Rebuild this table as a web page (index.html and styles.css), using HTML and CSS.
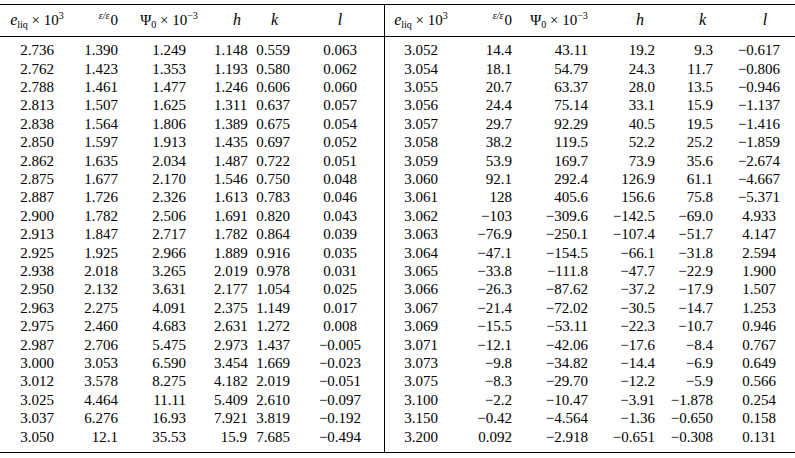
FILE: index.html
```html
<!DOCTYPE html>
<html>
<head>
<meta charset="utf-8">
<link rel="stylesheet" href="styles.css">
</head>
<body>
<div class="sheet">
  <div class="half left">
    <div class="head">
      <div class="c1"><i class="e">e</i><sub>liq</sub> × 10<sup>3</sup></div>
      <div class="c2"><span class="frac">ε/ε</span>0</div>
      <div class="c3">Ψ<sub>0</sub> × 10<sup>−3</sup></div>
      <div class="c4"><i class="var">h</i></div>
      <div class="c5"><i class="var">k</i></div>
      <div class="c6"><i class="var">l</i></div>
    </div>
    <div class="rows">
      <div class="row"><span class="c1">2.736</span><span class="c2">1.390</span><span class="c3">1.249</span><span class="c4">1.148</span><span class="c5">0.559</span><span class="c6">0.063</span></div>
      <div class="row"><span class="c1">2.762</span><span class="c2">1.423</span><span class="c3">1.353</span><span class="c4">1.193</span><span class="c5">0.580</span><span class="c6">0.062</span></div>
      <div class="row"><span class="c1">2.788</span><span class="c2">1.461</span><span class="c3">1.477</span><span class="c4">1.246</span><span class="c5">0.606</span><span class="c6">0.060</span></div>
      <div class="row"><span class="c1">2.813</span><span class="c2">1.507</span><span class="c3">1.625</span><span class="c4">1.311</span><span class="c5">0.637</span><span class="c6">0.057</span></div>
      <div class="row"><span class="c1">2.838</span><span class="c2">1.564</span><span class="c3">1.806</span><span class="c4">1.389</span><span class="c5">0.675</span><span class="c6">0.054</span></div>
      <div class="row"><span class="c1">2.850</span><span class="c2">1.597</span><span class="c3">1.913</span><span class="c4">1.435</span><span class="c5">0.697</span><span class="c6">0.052</span></div>
      <div class="row"><span class="c1">2.862</span><span class="c2">1.635</span><span class="c3">2.034</span><span class="c4">1.487</span><span class="c5">0.722</span><span class="c6">0.051</span></div>
      <div class="row"><span class="c1">2.875</span><span class="c2">1.677</span><span class="c3">2.170</span><span class="c4">1.546</span><span class="c5">0.750</span><span class="c6">0.048</span></div>
      <div class="row"><span class="c1">2.887</span><span class="c2">1.726</span><span class="c3">2.326</span><span class="c4">1.613</span><span class="c5">0.783</span><span class="c6">0.046</span></div>
      <div class="row"><span class="c1">2.900</span><span class="c2">1.782</span><span class="c3">2.506</span><span class="c4">1.691</span><span class="c5">0.820</span><span class="c6">0.043</span></div>
      <div class="row"><span class="c1">2.913</span><span class="c2">1.847</span><span class="c3">2.717</span><span class="c4">1.782</span><span class="c5">0.864</span><span class="c6">0.039</span></div>
      <div class="row"><span class="c1">2.925</span><span class="c2">1.925</span><span class="c3">2.966</span><span class="c4">1.889</span><span class="c5">0.916</span><span class="c6">0.035</span></div>
      <div class="row"><span class="c1">2.938</span><span class="c2">2.018</span><span class="c3">3.265</span><span class="c4">2.019</span><span class="c5">0.978</span><span class="c6">0.031</span></div>
      <div class="row"><span class="c1">2.950</span><span class="c2">2.132</span><span class="c3">3.631</span><span class="c4">2.177</span><span class="c5">1.054</span><span class="c6">0.025</span></div>
      <div class="row"><span class="c1">2.963</span><span class="c2">2.275</span><span class="c3">4.091</span><span class="c4">2.375</span><span class="c5">1.149</span><span class="c6">0.017</span></div>
      <div class="row"><span class="c1">2.975</span><span class="c2">2.460</span><span class="c3">4.683</span><span class="c4">2.631</span><span class="c5">1.272</span><span class="c6">0.008</span></div>
      <div class="row"><span class="c1">2.987</span><span class="c2">2.706</span><span class="c3">5.475</span><span class="c4">2.973</span><span class="c5">1.437</span><span class="c6">−0.005</span></div>
      <div class="row"><span class="c1">3.000</span><span class="c2">3.053</span><span class="c3">6.590</span><span class="c4">3.454</span><span class="c5">1.669</span><span class="c6">−0.023</span></div>
      <div class="row"><span class="c1">3.012</span><span class="c2">3.578</span><span class="c3">8.275</span><span class="c4">4.182</span><span class="c5">2.019</span><span class="c6">−0.051</span></div>
      <div class="row"><span class="c1">3.025</span><span class="c2">4.464</span><span class="c3">11.11</span><span class="c4">5.409</span><span class="c5">2.610</span><span class="c6">−0.097</span></div>
      <div class="row"><span class="c1">3.037</span><span class="c2">6.276</span><span class="c3">16.93</span><span class="c4">7.921</span><span class="c5">3.819</span><span class="c6">−0.192</span></div>
      <div class="row"><span class="c1">3.050</span><span class="c2">12.1</span><span class="c3">35.53</span><span class="c4">15.9</span><span class="c5">7.685</span><span class="c6">−0.494</span></div>
    </div>
  </div>
  <div class="half right">
    <div class="head">
      <div class="c1"><i class="e">e</i><sub>liq</sub> × 10<sup>3</sup></div>
      <div class="c2"><span class="frac">ε/ε</span>0</div>
      <div class="c3">Ψ<sub>0</sub> × 10<sup>−3</sup></div>
      <div class="c4"><i class="var">h</i></div>
      <div class="c5"><i class="var">k</i></div>
      <div class="c6"><i class="var">l</i></div>
    </div>
    <div class="rows">
      <div class="row"><span class="c1">3.052</span><span class="c2">14.4</span><span class="c3">43.11</span><span class="c4">19.2</span><span class="c5">9.3</span><span class="c6">−0.617</span></div>
      <div class="row"><span class="c1">3.054</span><span class="c2">18.1</span><span class="c3">54.79</span><span class="c4">24.3</span><span class="c5">11.7</span><span class="c6">−0.806</span></div>
      <div class="row"><span class="c1">3.055</span><span class="c2">20.7</span><span class="c3">63.37</span><span class="c4">28.0</span><span class="c5">13.5</span><span class="c6">−0.946</span></div>
      <div class="row"><span class="c1">3.056</span><span class="c2">24.4</span><span class="c3">75.14</span><span class="c4">33.1</span><span class="c5">15.9</span><span class="c6">−1.137</span></div>
      <div class="row"><span class="c1">3.057</span><span class="c2">29.7</span><span class="c3">92.29</span><span class="c4">40.5</span><span class="c5">19.5</span><span class="c6">−1.416</span></div>
      <div class="row"><span class="c1">3.058</span><span class="c2">38.2</span><span class="c3">119.5</span><span class="c4">52.2</span><span class="c5">25.2</span><span class="c6">−1.859</span></div>
      <div class="row"><span class="c1">3.059</span><span class="c2">53.9</span><span class="c3">169.7</span><span class="c4">73.9</span><span class="c5">35.6</span><span class="c6">−2.674</span></div>
      <div class="row"><span class="c1">3.060</span><span class="c2">92.1</span><span class="c3">292.4</span><span class="c4">126.9</span><span class="c5">61.1</span><span class="c6">−4.667</span></div>
      <div class="row"><span class="c1">3.061</span><span class="c2">128</span><span class="c3">405.6</span><span class="c4">156.6</span><span class="c5">75.8</span><span class="c6">−5.371</span></div>
      <div class="row"><span class="c1">3.062</span><span class="c2">−103</span><span class="c3">−309.6</span><span class="c4">−142.5</span><span class="c5">−69.0</span><span class="c6">4.933</span></div>
      <div class="row"><span class="c1">3.063</span><span class="c2">−76.9</span><span class="c3">−250.1</span><span class="c4">−107.4</span><span class="c5">−51.7</span><span class="c6">4.147</span></div>
      <div class="row"><span class="c1">3.064</span><span class="c2">−47.1</span><span class="c3">−154.5</span><span class="c4">−66.1</span><span class="c5">−31.8</span><span class="c6">2.594</span></div>
      <div class="row"><span class="c1">3.065</span><span class="c2">−33.8</span><span class="c3">−111.8</span><span class="c4">−47.7</span><span class="c5">−22.9</span><span class="c6">1.900</span></div>
      <div class="row"><span class="c1">3.066</span><span class="c2">−26.3</span><span class="c3">−87.62</span><span class="c4">−37.2</span><span class="c5">−17.9</span><span class="c6">1.507</span></div>
      <div class="row"><span class="c1">3.067</span><span class="c2">−21.4</span><span class="c3">−72.02</span><span class="c4">−30.5</span><span class="c5">−14.7</span><span class="c6">1.253</span></div>
      <div class="row"><span class="c1">3.069</span><span class="c2">−15.5</span><span class="c3">−53.11</span><span class="c4">−22.3</span><span class="c5">−10.7</span><span class="c6">0.946</span></div>
      <div class="row"><span class="c1">3.071</span><span class="c2">−12.1</span><span class="c3">−42.06</span><span class="c4">−17.6</span><span class="c5">−8.4</span><span class="c6">0.767</span></div>
      <div class="row"><span class="c1">3.073</span><span class="c2">−9.8</span><span class="c3">−34.82</span><span class="c4">−14.4</span><span class="c5">−6.9</span><span class="c6">0.649</span></div>
      <div class="row"><span class="c1">3.075</span><span class="c2">−8.3</span><span class="c3">−29.70</span><span class="c4">−12.2</span><span class="c5">−5.9</span><span class="c6">0.566</span></div>
      <div class="row"><span class="c1">3.100</span><span class="c2">−2.2</span><span class="c3">−10.47</span><span class="c4">−3.91</span><span class="c5">−1.878</span><span class="c6">0.254</span></div>
      <div class="row"><span class="c1">3.150</span><span class="c2">−0.42</span><span class="c3">−4.564</span><span class="c4">−1.36</span><span class="c5">−0.650</span><span class="c6">0.158</span></div>
      <div class="row"><span class="c1">3.200</span><span class="c2">0.092</span><span class="c3">−2.918</span><span class="c4">−0.651</span><span class="c5">−0.308</span><span class="c6">0.131</span></div>
    </div>
  </div>
</div>
</body>
</html>
```
FILE: styles.css
```css
html, body {
  margin: 0;
  padding: 0;
  background: #fff;
}

body {
  color: #000;
  font-family: "Liberation Serif", "DejaVu Serif", serif;
  font-size: 15px;
}

.sheet {
  margin-top: 4px;
  display: flex;
  width: 795px;
  border-top: 1px solid #000;
  border-bottom: 1px solid #000;
}

.half.left {
  width: 384px;
  border-right: 1px solid #000;
}

.half.right {
  width: 410px;
}

.head {
  display: grid;
  height: 32px;
  box-sizing: border-box;
  padding-top: 5.7px;
  line-height: 18.4px;
  border-bottom: 1px solid #000;
  white-space: nowrap;
}

.rows {
  padding: 4.3px 0 5.9px;
}

.row {
  display: grid;
  height: 18.4px;
  line-height: 18.4px;
  white-space: nowrap;
}

.left .head,
.left .row {
  grid-template-columns: 74px 50px 90px 36px 46px 88px;
}

.right .head,
.right .row {
  grid-template-columns: 72px 60px 84px 60px 62px 72px;
}

.c1 { text-align: center; }
.c6 { text-align: center; }
.c2, .c3, .c4, .c5 { text-align: right; }

/* left data column insets */
.left .c2 { padding-right: 6px; }
.left .c3 { padding-right: 28px; }
.left .c4 { padding-right: 3px; }
.left .c5 { padding-right: 6px; }

/* right data column insets */
.right .c2 { padding-right: 5px; }
.right .c3 { padding-right: 13px; }
.right .c4 { padding-right: 6px; }
.right .c5 { padding-right: 10px; }

/* header alignment */
.head .c3 { text-align: center; padding-right: 0; }
.left .head .c4 { padding-right: 9px; }
.left .head .c5 { padding-right: 18px; }
.right .head .c4 { padding-right: 17px; }
.right .head .c5 { padding-right: 17px; }
.right .head .c6 { padding-left: 12px; }

i {
  font-style: italic;
}

.e {
  font-size: 16px;
}

.var {
  font-size: 16px;
  font-weight: normal;
}

sub, sup {
  font-size: 10px;
  line-height: 0;
}

sub {
  vertical-align: -3px;
}

sup {
  vertical-align: 6px;
}

.frac {
  font-size: 10px;
  font-style: italic;
  line-height: 0;
  vertical-align: 6px;
  margin-right: 1px;
}
```
